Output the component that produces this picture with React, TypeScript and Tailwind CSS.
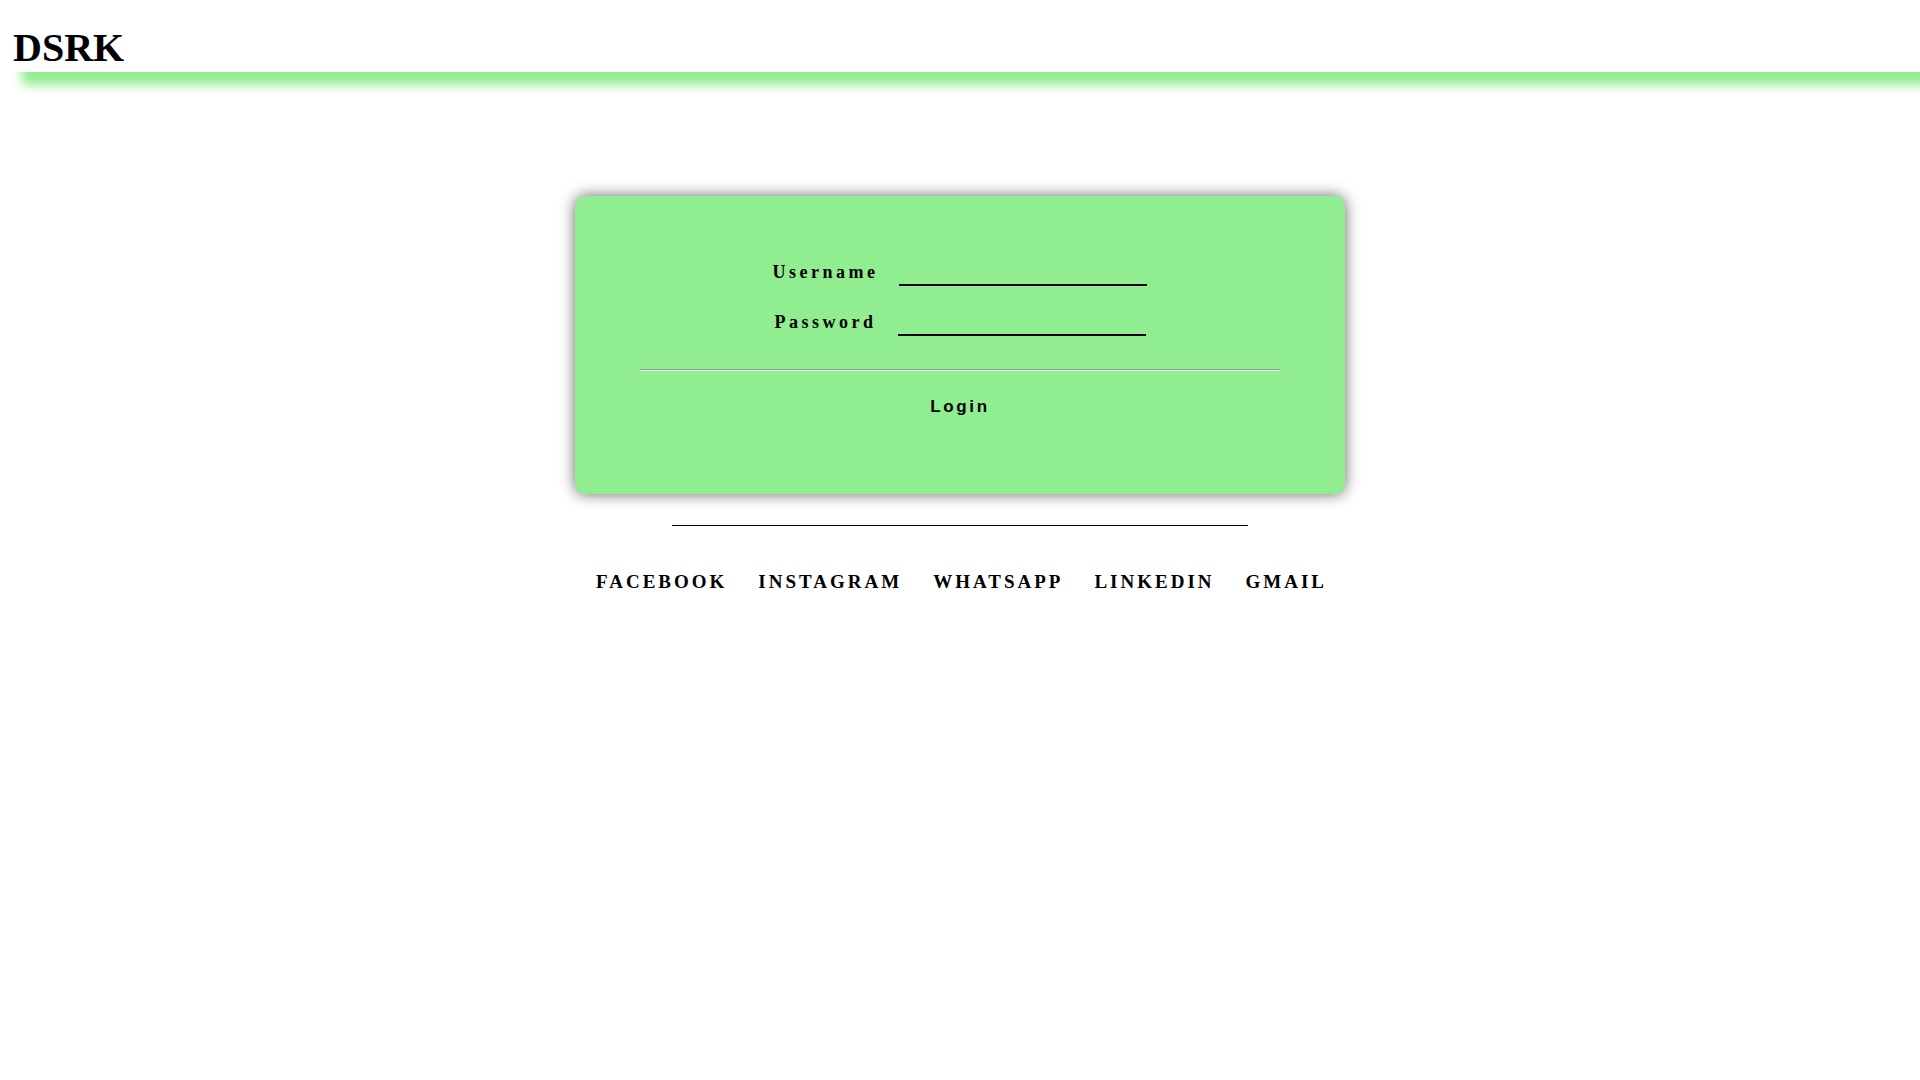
import { useState } from "react";

const links = ["FACEBOOK", "INSTAGRAM", "WHATSAPP", "LINKEDIN", "GMAIL"];

function Field({ label, type }: { label: string; type: string }) {
  const [value, setValue] = useState("");
  return (
    <div className="flex items-start justify-center gap-[21px]">
      <label className="text-[18px] font-bold leading-[24px] tracking-[3.5px] text-black">{label}</label>
      <input
        type={type}
        value={value}
        onChange={(e) => setValue(e.target.value)}
        className="h-[26px] w-[248px] border-b-2 border-black bg-transparent outline-none"
      />
    </div>
  );
}

export default function App() {
  return (
    <div className="min-h-screen bg-white font-['Liberation_Serif',serif] text-black">
      <header className="h-[72px] bg-white pl-[13px] pt-[25px] shadow-[22px_13px_10px_#90ee90]">
        <h1 className="text-[40px] font-bold leading-[46px]">DSRK</h1>
      </header>

      <main className="flex flex-col items-center">
        <form
          onSubmit={(e) => e.preventDefault()}
          className="mt-[124px] flex h-[298px] w-[770px] flex-col rounded-[10px] bg-[#90ee90] pt-16 shadow-[0_0_15px_rgba(0,0,0,0.6)]"
        >
          <div className="flex flex-col gap-6">
            <Field label="Username" type="text" />
            <Field label="Password" type="password" />
          </div>
          <div className="mx-16 mt-[33px] h-0 border-t border-b border-t-[#9a9a9a] border-b-[#eeeeee]" />
          <button
            type="submit"
            className="mx-auto mt-6 h-6 bg-transparent font-['Liberation_Sans',Arial,sans-serif] text-[17px] font-bold leading-[24px] tracking-[2.6px] text-black"
          >
            Login
          </button>
        </form>

        <div className="mt-[31px] h-px w-[576px] bg-black" />

        <nav className="mt-[43px] flex justify-center gap-[31px] pl-[3px]">
          {links.map((l) => (
            <a key={l} href="#" className="text-[19px] font-bold leading-[25px] tracking-[3px] text-black">
              {l}
            </a>
          ))}
        </nav>
      </main>
    </div>
  );
}
